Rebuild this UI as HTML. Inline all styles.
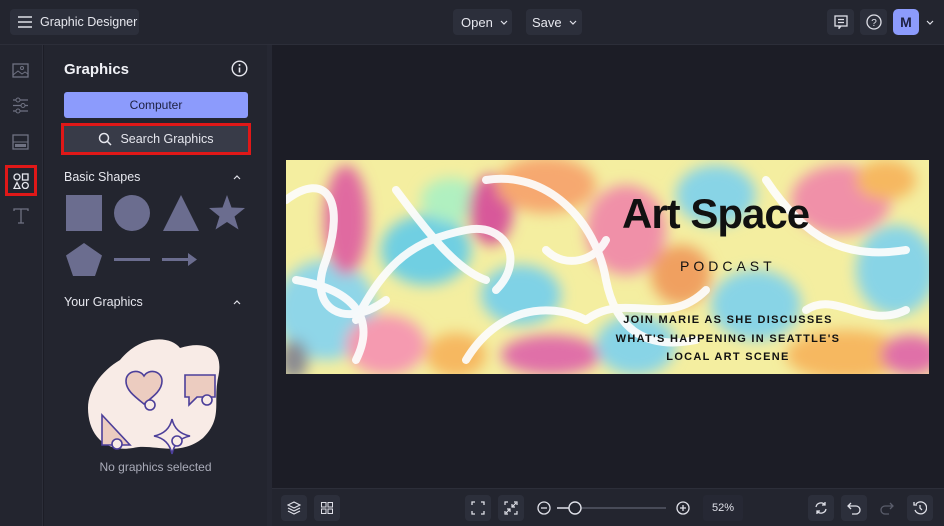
<!DOCTYPE html>
<html><head><meta charset="utf-8"><style>
*{box-sizing:border-box;margin:0;padding:0}
body{width:944px;height:526px;overflow:hidden;background:#1c1d26;font-family:"Liberation Sans",sans-serif;color:#e6e7ee;position:relative}
.top{position:absolute;left:0;top:0;width:944px;height:45px;background:#23252f;border-bottom:1px solid #2c2e39}
.btn{position:absolute;background:#2c2f3b;border-radius:4px;font-size:13px;color:#e6e7ee;display:flex;align-items:center;white-space:nowrap}
.rail{position:absolute;left:0;top:45px;width:43px;height:481px;background:#23252f;border-right:1px solid #2c2e39}
.panel{position:absolute;left:44px;top:45px;width:223px;height:481px;background:#23252f}
.strip{position:absolute;left:267px;top:45px;width:5px;height:481px;background:#262833}
.bottom{position:absolute;left:272px;top:488px;width:672px;height:38px;background:#23252f;border-top:1px solid #2c2e39}
.ib{position:absolute;top:6px;width:26px;height:26px;background:#2c2f3b;border-radius:4px;display:flex;align-items:center;justify-content:center}
svg{display:block}
</style></head><body>
<div class="top">
  <div class="btn" style="left:10px;top:9px;width:129px;height:26px;padding-left:8px;font-size:12.5px">
    <svg width="14" height="12"><path d="M0 1h14M0 6h14M0 11h14" stroke="#dfe0e8" stroke-width="1.4"/></svg>
    <span style="margin-left:8px">Graphic Designer</span></div>
  <div class="btn" style="left:453px;top:9px;width:59px;height:26px;padding-left:8px">Open <svg style="margin-left:7px" width="8" height="5"><path d="M1 1l3 3 3-3" stroke="#dfe0e8" fill="none" stroke-width="1.2"/></svg></div>
  <div class="btn" style="left:526px;top:9px;width:56px;height:26px;padding-left:6px">Save <svg style="margin-left:7px" width="8" height="5"><path d="M1 1l3 3 3-3" stroke="#dfe0e8" fill="none" stroke-width="1.2"/></svg></div>
  <div class="btn" style="left:827px;top:9px;width:27px;height:26px;justify-content:center">
    <svg width="14" height="14"><rect x="1" y="1" width="12" height="10" fill="none" stroke="#dfe0e8" stroke-width="1.3"/><path d="M4 4.5h6M4 7.5h6M5 11l0 2.5 2-2.5" stroke="#dfe0e8" stroke-width="1.2" fill="none"/></svg></div>
  <div class="btn" style="left:860px;top:9px;width:27px;height:26px;justify-content:center">
    <svg width="16" height="16"><circle cx="8" cy="8" r="7" fill="none" stroke="#dfe0e8" stroke-width="1.3"/><text x="8" y="12" font-size="10" text-anchor="middle" fill="#dfe0e8" font-family="Liberation Sans">?</text></svg></div>
  <div style="position:absolute;left:893px;top:9px;width:26px;height:26px;background:#8c9bfc;border-radius:5px;color:#1d2040;font-size:14px;font-weight:bold;display:flex;align-items:center;justify-content:center">M</div>
  <svg style="position:absolute;left:926px;top:20px" width="8" height="5"><path d="M1 1l3 3 3-3" stroke="#dfe0e8" fill="none" stroke-width="1.2"/></svg>
</div>
<div class="rail">
  <svg style="position:absolute;left:12px;top:18px" width="17" height="15"><rect x="1" y="1" width="15" height="13" fill="none" stroke="#6f7282" stroke-width="1.3"/><path d="M1 12l5-4 4 3 3-2 3 2" stroke="#6f7282" fill="none"/><circle cx="10" cy="5" r="1.5" stroke="#6f7282" fill="none"/></svg>
  <svg style="position:absolute;left:12px;top:52px" width="17" height="17"><path d="M1 3h15M1 8.5h15M1 14h15" stroke="#6f7282" stroke-width="1.2"/><circle cx="6" cy="3" r="2" fill="#23252f" stroke="#6f7282"/><circle cx="11" cy="8.5" r="2" fill="#23252f" stroke="#6f7282"/><circle cx="6" cy="14" r="2" fill="#23252f" stroke="#6f7282"/></svg>
  <svg style="position:absolute;left:12px;top:89px" width="17" height="16"><rect x="1" y="1" width="15" height="14" fill="none" stroke="#6f7282" stroke-width="1.3"/><path d="M1 8h15" stroke="#6f7282"/><rect x="3" y="10" width="11" height="3" fill="#6f7282"/></svg>
  <div style="position:absolute;left:5px;top:120px;width:32px;height:31px;border:3px solid #e01818"></div>
  <svg style="position:absolute;left:13px;top:128px" width="16" height="16"><circle cx="4" cy="4" r="3" fill="none" stroke="#e6e7ee" stroke-width="1.3"/><rect x="9.5" y="1" width="5.5" height="6" fill="none" stroke="#e6e7ee" stroke-width="1.3"/><path d="M4 9.5l3 6H1z" fill="none" stroke="#e6e7ee" stroke-width="1.3"/><circle cx="12.3" cy="12.5" r="3" fill="none" stroke="#e6e7ee" stroke-width="1.3"/></svg>
  <svg style="position:absolute;left:13px;top:163px" width="16" height="16"><path d="M1 3V1h14v2M8 1v14M5 15h6" stroke="#6f7282" stroke-width="1.3" fill="none"/></svg>
</div>
<div class="panel">
  <div style="position:absolute;left:20px;top:16px;font-size:15px;font-weight:bold;color:#f0f1f6">Graphics</div>
  <svg style="position:absolute;left:187px;top:15px" width="17" height="17"><circle cx="8.5" cy="8.5" r="7.3" fill="none" stroke="#e6e7ee" stroke-width="1.4"/><path d="M8.5 7.5v5" stroke="#e6e7ee" stroke-width="1.6"/><circle cx="8.5" cy="5" r="1" fill="#e6e7ee"/></svg>
  <div style="position:absolute;left:20px;top:47px;width:184px;height:26px;background:#8c9bfc;border-radius:3px;color:#1d2040;font-size:12px;display:flex;align-items:center;justify-content:center">Computer</div>
  <div style="position:absolute;left:17px;top:78px;width:190px;height:32px;border:3px solid #e01818;background:#383b48;font-size:12.5px;color:#e6e7ee;display:flex;align-items:center;justify-content:center">
    <svg width="14" height="14" style="margin-right:8px"><circle cx="6" cy="6" r="4.5" fill="none" stroke="#e6e7ee" stroke-width="1.5"/><path d="M9.5 9.5l3.5 3.5" stroke="#e6e7ee" stroke-width="1.5"/></svg>Search Graphics</div>
  <div style="position:absolute;left:20px;top:125px;font-size:12.5px">Basic Shapes</div>
  <svg style="position:absolute;left:189px;top:130px" width="8" height="5"><path d="M1 4l3-3 3 3" stroke="#dfe0e8" fill="none" stroke-width="1.2"/></svg>
  <svg style="position:absolute;left:20px;top:150px" width="190" height="90">
    <rect x="2" y="0" width="36" height="36" fill="#6b6d8f"/>
    <circle cx="68" cy="18" r="18" fill="#6b6d8f"/>
    <path d="M117 0l18 36h-36z" fill="#6b6d8f"/>
    <path d="M163 0l4.5 12.5 13.5 0.5-10.5 8.5 4 13-11.5-7.5-11.5 7.5 4-13-10.5-8.5 13.5-0.5z" fill="#6b6d8f"/>
    <path d="M20 48l18 12.5-7 20.5h-22l-7-20.5z" fill="#6b6d8f"/>
    <rect x="50" y="63" width="36" height="3" fill="#6b6d8f"/>
    <path d="M98 63h26v-5l9 6.5-9 6.5v-5h-26z" fill="#6b6d8f"/>
  </svg>
  <div style="position:absolute;left:20px;top:250px;font-size:12.5px">Your Graphics</div>
  <svg style="position:absolute;left:189px;top:255px" width="8" height="5"><path d="M1 4l3-3 3 3" stroke="#dfe0e8" fill="none" stroke-width="1.2"/></svg>
  <svg style="position:absolute;left:16px;top:275px" width="200" height="160">
    <path d="M60 40c20-25 50-25 60-12 25-8 45 0 38 30-5 25 5 40-15 60-25 20-50 5-70 10-30 5-45-15-45-40 0-20 15-38 32-48z" fill="#f8ebe6"/>
    <path d="M84 84c-10-8-18-14-18-23 0-10 13-13 18-5 5-8 18-5 18 5 0 9-8 15-18 23z" fill="#ecccc0" stroke="#4c3f9a" stroke-width="1.6"/>
    <circle cx="90" cy="85" r="5" fill="#f8ebe6" stroke="#4c3f9a" stroke-width="1.6"/>
    <path d="M125 55h30v22h-18l-8 8v-8h-4z" fill="#ecccc0" stroke="#4c3f9a" stroke-width="1.6"/>
    <circle cx="147" cy="80" r="5" fill="#f8ebe6" stroke="#4c3f9a" stroke-width="1.6"/>
    <path d="M42 95v30h28z" fill="#ecccc0" stroke="#4c3f9a" stroke-width="1.6"/>
    <circle cx="57" cy="124" r="5" fill="#f8ebe6" stroke="#4c3f9a" stroke-width="1.6"/>
    <path d="M112 99q3 14 18 17q-15 3-18 18q-3-15-18-18q15-3 18-17z" fill="#f8ebe6" stroke="#4c3f9a" stroke-width="1.6"/>
    <circle cx="117" cy="121" r="5" fill="#f8ebe6" stroke="#4c3f9a" stroke-width="1.6"/>
  </svg>
  <div style="position:absolute;left:0;width:223px;top:415px;text-align:center;font-size:12px;color:#a9abb8">No graphics selected</div>
</div>
<div class="strip"></div>
<div style="position:absolute;left:286px;top:160px;width:643px;height:214px;overflow:hidden;background:#f4eea0">
  <svg width="643" height="214" style="position:absolute;left:0;top:0">
    <defs><filter id="b" x="-30%" y="-30%" width="160%" height="160%"><feGaussianBlur stdDeviation="7"/></filter></defs>
    <g filter="url(#b)">
      <ellipse cx="40" cy="150" rx="50" ry="50" fill="#8fd6e8"/>
      <ellipse cx="60" cy="60" rx="22" ry="55" fill="#e06aa0"/>
      <ellipse cx="140" cy="90" rx="45" ry="35" fill="#6fcfe2"/>
      <ellipse cx="165" cy="40" rx="30" ry="22" fill="#b0f0c0"/>
      <ellipse cx="205" cy="50" rx="22" ry="35" fill="#d8589a"/>
      <ellipse cx="260" cy="25" rx="50" ry="28" fill="#f6a870"/>
      <ellipse cx="235" cy="135" rx="40" ry="30" fill="#7fd2e6"/>
      <ellipse cx="100" cy="185" rx="40" ry="30" fill="#f59ab0"/>
      <ellipse cx="170" cy="195" rx="30" ry="22" fill="#f6b860"/>
      <ellipse cx="265" cy="195" rx="50" ry="20" fill="#e070a8"/>
      <ellipse cx="340" cy="70" rx="40" ry="45" fill="#f090a8"/>
      <ellipse cx="395" cy="115" rx="30" ry="30" fill="#f0a060"/>
      <ellipse cx="430" cy="35" rx="40" ry="30" fill="#88d4e6"/>
      <ellipse cx="470" cy="145" rx="45" ry="35" fill="#88d4e6"/>
      <ellipse cx="555" cy="40" rx="50" ry="35" fill="#f090a8"/>
      <ellipse cx="610" cy="110" rx="40" ry="45" fill="#88d4e6"/>
      <ellipse cx="560" cy="195" rx="60" ry="25" fill="#f6b860"/>
      <ellipse cx="625" cy="195" rx="30" ry="20" fill="#e070a8"/>
      <ellipse cx="350" cy="185" rx="40" ry="30" fill="#88d4e6"/>
      <ellipse cx="8" cy="200" rx="14" ry="20" fill="#8a8a90"/>
      <ellipse cx="600" cy="20" rx="30" ry="20" fill="#f6b860"/>
    </g>
    <g fill="none" stroke="#fdfdfd" stroke-width="8" stroke-linecap="round" opacity="0.92">
      <path d="M0 40c40-30 60 0 40 60-20 50 20 70 60 40"/>
      <path d="M70 160c30-60 60-80 110-90 40-8 60 30 30 60"/>
      <path d="M110 30c30 40 60 80 90 90"/>
      <path d="M180 200c30-50 80-60 120-40"/>
      <path d="M200 20c60-10 110 40 120 100 10 50 40 70 90 60"/>
      <path d="M300 160c40-30 80 10 120-30"/>
      <path d="M480 20c40 60 80 80 140 70"/>
      <path d="M520 150c30-20 60 20 100 0"/>
      <path d="M10 120c60 10 80 40 60 80"/>
      <path d="M260 90c20 20 50 10 60-10"/>
    </g>
  </svg>
  <div style="position:absolute;left:336px;top:30px;font-size:42px;font-weight:bold;color:#111;letter-spacing:-1px">Art Space</div>
  <div style="position:absolute;left:394px;top:98px;font-size:14px;letter-spacing:4px;color:#111">PODCAST</div>
  <div style="position:absolute;left:310px;top:151px;width:264px;text-align:center;font-size:11px;line-height:18.5px;font-weight:bold;letter-spacing:1.3px;color:#111">JOIN MARIE AS SHE DISCUSSES<br>WHAT'S HAPPENING IN SEATTLE'S<br>LOCAL ART SCENE</div>
</div>
<div class="bottom">
  <div class="ib" style="left:9px"><svg width="14" height="14"><path d="M7 1l6 3-6 3-6-3z M1 7l6 3 6-3M1 10l6 3 6-3" fill="none" stroke="#dfe0e8" stroke-width="1.2"/></svg></div>
  <div class="ib" style="left:42px"><svg width="12" height="12"><rect x="0.5" y="0.5" width="4.5" height="4.5" fill="none" stroke="#dfe0e8"/><rect x="7" y="0.5" width="4.5" height="4.5" fill="none" stroke="#dfe0e8"/><rect x="0.5" y="7" width="4.5" height="4.5" fill="none" stroke="#dfe0e8"/><rect x="7" y="7" width="4.5" height="4.5" fill="none" stroke="#dfe0e8"/></svg></div>
  <div class="ib" style="left:193px"><svg width="14" height="14"><path d="M1 4V1h3M10 1h3v3M13 10v3h-3M4 13H1v-3" fill="none" stroke="#dfe0e8" stroke-width="1.3"/></svg></div>
  <div class="ib" style="left:226px"><svg width="14" height="14"><path d="M1 4V1h3M10 1h3v3M13 10v3h-3M4 13H1v-3M12 2L8 6M8 3v3h3M2 12l4-4M3 8h3v3" fill="none" stroke="#dfe0e8" stroke-width="1.2"/></svg></div>
  <svg style="position:absolute;left:265px;top:12px" width="140" height="14"><circle cx="7" cy="7" r="6" fill="none" stroke="#dfe0e8" stroke-width="1.3"/><path d="M4 7h6" stroke="#dfe0e8" stroke-width="1.3"/><path d="M20 7h12" stroke="#dfe0e8" stroke-width="1.5"/><path d="M44 7h85" stroke="#555867" stroke-width="1.5"/><circle cx="38" cy="7" r="6" fill="#23252f" stroke="#dfe0e8" stroke-width="1.4"/></svg>
  <svg style="position:absolute;left:404px;top:12px" width="14" height="14"><circle cx="7" cy="7" r="6" fill="none" stroke="#dfe0e8" stroke-width="1.3"/><path d="M4 7h6M7 4v6" stroke="#dfe0e8" stroke-width="1.3"/></svg>
  <div style="position:absolute;left:431px;top:6px;width:40px;height:26px;background:#262834;border-radius:3px;font-size:11px;display:flex;align-items:center;justify-content:center;color:#dfe0e8">52%</div>
  <div class="ib" style="left:536px"><svg width="14" height="14"><path d="M11 4a5 5 0 0 0-9 2M3 10a5 5 0 0 0 9-2M11 1v3h-3M3 13v-3h3" fill="none" stroke="#dfe0e8" stroke-width="1.3"/></svg></div>
  <div class="ib" style="left:569px"><svg width="14" height="14"><path d="M4 2L1 5l3 3M1 5h8a4 4 0 0 1 0 8H5" fill="none" stroke="#dfe0e8" stroke-width="1.3"/></svg></div>
  <div class="ib" style="left:602px;background:none"><svg width="14" height="14"><path d="M10 2l3 3-3 3M13 5H5a4 4 0 0 0 0 8h4" fill="none" stroke="#5a5d6b" stroke-width="1.3"/></svg></div>
  <div class="ib" style="left:635px"><svg width="14" height="14"><path d="M3 3a6 6 0 1 1-1 6M1 1v3h3M7 4v3l2 2" fill="none" stroke="#dfe0e8" stroke-width="1.3"/></svg></div>
</div>
</body></html>
